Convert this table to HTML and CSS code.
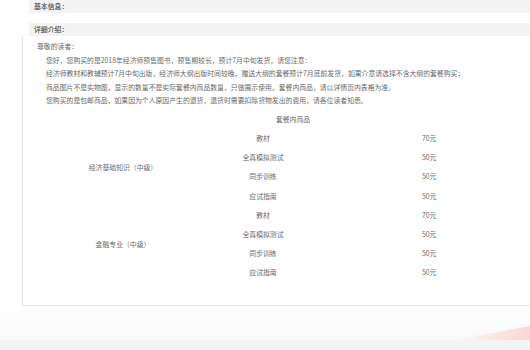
FILE: index.html
```html
<!DOCTYPE html>
<html lang="zh-CN">
<head>
<meta charset="utf-8">
<link rel="stylesheet" href="styles.css">
</head>
<body>
<div class="page">
  <div class="bar">基本信息：</div>
  <div class="bar bar-second">详细介绍：</div>
  <div class="box">
    <p class="greet">尊敬的读者：</p>
    <div class="notes">
      <p>您好，您购买的是2018年经济师预售图书，预售期较长，预计7月中旬发货，请您注意：</p>
      <p>经济师教材和教辅预计7月中旬出版，经济师大纲出版时间较晚，赠送大纲的套餐预计7月底前发货，如果介意请选择不含大纲的套餐购买；</p>
      <p>商品图片不是实物图，显示的数量不是实际套餐内商品数量，只做展示使用，套餐内商品，请以详情页内表格为准。</p>
      <p>您购买的是包邮商品，如果因为个人原因产生的退货，退货时需要扣除货物发出的费用，请各位读者知悉。</p>
    </div>
    <div class="table">
      <div class="head">套餐内商品</div>
      <div class="group">
        <div class="label">经济基础知识（中级）</div>
        <div class="items">
          <div class="row"><span class="name">教材</span><span class="price">70元</span></div>
          <div class="row"><span class="name">全真模拟测试</span><span class="price">50元</span></div>
          <div class="row"><span class="name">同步训练</span><span class="price">50元</span></div>
          <div class="row"><span class="name">应试指南</span><span class="price">50元</span></div>
        </div>
      </div>
      <div class="group">
        <div class="label">金融专业（中级）</div>
        <div class="items">
          <div class="row"><span class="name">教材</span><span class="price">70元</span></div>
          <div class="row"><span class="name">全真模拟测试</span><span class="price">50元</span></div>
          <div class="row"><span class="name">同步训练</span><span class="price">50元</span></div>
          <div class="row"><span class="name">应试指南</span><span class="price">50元</span></div>
        </div>
      </div>
    </div>
  </div>
</div>
<div class="footer">
  <div class="footer-fade"><div class="swoosh"></div></div>
  <div class="footer-band"></div>
</div>
</body>
</html>
```
FILE: styles.css
```css
html, body {
  margin: 0;
  padding: 0;
  background: #ffffff;
  overflow: hidden;
}
body {
  width: 530px;
  height: 350px;
  font-family: "Noto Sans CJK SC", "Noto Sans", sans-serif;
  font-size: 6.85px;
  color: #6a6a6a;
}
.page {
  width: 508px;
  padding-left: 22px;
}
.bar {
  margin-left: 7px;
  height: 13px;
  line-height: 13px;
  background: #f3f3f3;
  padding-left: 5px;
  color: #505050;
  font-weight: normal;
  -webkit-text-stroke: 0.15px #505050;
}
.bar-second {
  margin-top: 10px;
}
.box {
  border-left: 1px solid #e4e4e4;
  border-bottom: 1px solid #e4e4e4;
  padding: 4px 0 24px 14px;
  box-sizing: border-box;
  height: 270px;
}
p {
  margin: 0;
  line-height: 13.5px;
}
.notes {
  padding-left: 9px;
}
.table {
  width: 493px;
  margin-top: 2px;
}
.head {
  height: 19px;
  line-height: 19px;
  width: 512px;
  text-align: center;
}
.group {
  display: flex;
}
.label {
  width: 172px;
  display: flex;
  align-items: center;
  justify-content: center;
}
.items {
  flex: 1;
}
.row {
  display: flex;
  height: 19.2px;
  align-items: center;
}
.name {
  width: 108px;
  text-align: center;
}
.price {
  padding-left: 105px;
}
.footer {
  height: 44px;
}
.footer-fade {
  position: relative;
  height: 34px;
  background: linear-gradient(#ffffff, #f9f9f9);
  overflow: hidden;
}
.swoosh {
  position: absolute;
  right: 0;
  bottom: 0;
  width: 75px;
  height: 14px;
  background: linear-gradient(90deg, rgba(252, 225, 215, 0) 0%, rgba(252, 215, 205, 0.6) 60%, rgba(250, 200, 190, 0.7) 100%);
  clip-path: polygon(0 100%, 100% 0, 100% 100%);
}
.footer-band {
  height: 10px;
  background: #f4f4f4;
}
```
